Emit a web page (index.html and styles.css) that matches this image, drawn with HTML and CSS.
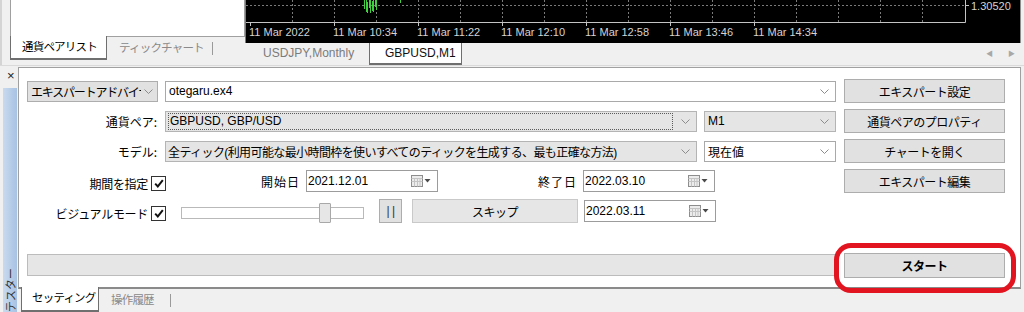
FILE: index.html
```html
<!DOCTYPE html>
<html lang="ja">
<head>
    <meta charset="UTF-8">
    <title>ストラテジーテスター</title>
    <link rel="stylesheet" href="styles.css">
</head>
<body>

    <div class="top">
        <div class="market">
            <div class="market-body"></div>
            <div class="tabs market-tabs">
                <div class="tab active">通貨ペアリスト</div>
                <div class="tab">ティックチャート</div>
                <span class="tab-sep"></span>
            </div>
        </div>

        <div class="chart-area">
            <div class="chart">
                <svg width="774" height="43" viewBox="0 0 774 43">
                    <g class="grid">
                        <line x1="0" y1="5.5" x2="718" y2="5.5"/>
                        <path d="M46.5 0v22M88.5 0v22M130.5 0v22M172.5 0v22M214.5 0v22M256.5 0v22M298.5 0v22M340.5 0v22M382.5 0v22M424.5 0v22M466.5 0v22M508.5 0v22M550.5 0v22M592.5 0v22M634.5 0v22M676.5 0v22"/>
                    </g>
                    <path class="frame" d="M0 22.5H719.5V0M4.5 22v4M88.5 22v4M172.5 22v4M256.5 22v4M340.5 22v4M424.5 22v4M508.5 22v4M719 5.5h4"/>
                    <path class="candles" d="M118.5 0v9M120.5 0v12M121.5 2v11M123.5 0v8M124.5 0v13M126.5 1v10M127.5 0v12M129.5 0v7M130.5 0v10M154.5 0v3"/>
                    <g class="axis">
                        <text x="3" y="36">11 Mar 2022</text>
                        <text x="87" y="36">11 Mar 10:34</text>
                        <text x="171" y="36">11 Mar 11:22</text>
                        <text x="255" y="36">11 Mar 12:10</text>
                        <text x="339" y="36">11 Mar 12:58</text>
                        <text x="423" y="36">11 Mar 13:46</text>
                        <text x="507" y="36">11 Mar 14:34</text>
                        <text x="725" y="10">1.30520</text>
                    </g>
                </svg>
            </div>
            <div class="chart-tabs">
                <div class="ctab">USDJPY,Monthly</div>
                <div class="ctab active">GBPUSD,M1</div>
                <div class="arrows"><span>&#9664;</span><span>&#9654;</span></div>
            </div>
        </div>
    </div>

    <div class="tester">
        <div class="side">
            <span class="close">&#215;</span>
            <div class="strip"><span class="strip-label">テスター</span></div>
        </div>

        <div class="main">
            <div class="form">
                <div class="row">
                    <div class="left">
                        <div class="combo w-type">
                            <span class="clip">エキスパートアドバイザ</span>
                            <svg class="chev" width="9" height="5" viewBox="0 0 9 5"><path d="M0.5 0.5l4 4 4-4"/></svg>
                        </div>
                        <div class="field w-ea">
                            <span>otegaru.ex4</span>
                            <svg class="chev" width="9" height="5" viewBox="0 0 9 5"><path d="M0.5 0.5l4 4 4-4"/></svg>
                        </div>
                    </div>
                    <button class="btn">エキスパート設定</button>
                </div>

                <div class="row">
                    <div class="left">
                        <label class="lbl">通貨ペア:</label>
                        <div class="select w-main">
                            <span class="focus">GBPUSD, GBP/USD</span>
                            <svg class="chev" width="9" height="5" viewBox="0 0 9 5"><path d="M0.5 0.5l4 4 4-4"/></svg>
                        </div>
                        <div class="select w-small">
                            <span>M1</span>
                            <svg class="chev" width="9" height="5" viewBox="0 0 9 5"><path d="M0.5 0.5l4 4 4-4"/></svg>
                        </div>
                    </div>
                    <button class="btn">通貨ペアのプロパティ</button>
                </div>

                <div class="row">
                    <div class="left">
                        <label class="lbl">モデル:</label>
                        <div class="select w-main">
                            <span class="clip model">全ティック(利用可能な最小時間枠を使いすべてのティックを生成する、最も正確な方法)</span>
                            <svg class="chev" width="9" height="5" viewBox="0 0 9 5"><path d="M0.5 0.5l4 4 4-4"/></svg>
                        </div>
                        <div class="field w-small">
                            <span>現在値</span>
                            <svg class="chev" width="9" height="5" viewBox="0 0 9 5"><path d="M0.5 0.5l4 4 4-4"/></svg>
                        </div>
                    </div>
                    <button class="btn">チャートを開く</button>
                </div>

                <div class="row">
                    <div class="left">
                        <label class="lbl-check">期間を指定 <span class="check"><svg width="10" height="9" viewBox="0 0 10 9"><path d="M1.2 4.6l2.6 2.8 5-6.2"/></svg></span></label>
                        <span class="date-lbl from">開始日</span>
                        <div class="date">
                            <span>2021.12.01</span>
                            <svg class="cal" width="20" height="12" viewBox="0 0 20 12"><rect x="0.5" y="0.5" width="11" height="11"/><path d="M0.5 3.5h11M0.5 6.5h11M3.5 3.5v8M6.5 3.5v8M9 3.5v8"/><path class="arr" d="M13.5 4h6l-3 3.5z"/></svg>
                        </div>
                        <span class="date-lbl to">終了日</span>
                        <div class="date">
                            <span>2022.03.10</span>
                            <svg class="cal" width="20" height="12" viewBox="0 0 20 12"><rect x="0.5" y="0.5" width="11" height="11"/><path d="M0.5 3.5h11M0.5 6.5h11M3.5 3.5v8M6.5 3.5v8M9 3.5v8"/><path class="arr" d="M13.5 4h6l-3 3.5z"/></svg>
                        </div>
                    </div>
                    <button class="btn">エキスパート編集</button>
                </div>

                <div class="row">
                    <div class="left">
                        <label class="lbl-check">ビジュアルモード <span class="check"><svg width="10" height="9" viewBox="0 0 10 9"><path d="M1.2 4.6l2.6 2.8 5-6.2"/></svg></span></label>
                        <div class="slider"><span class="thumb"></span></div>
                        <button class="btn pause">| |</button>
                        <button class="btn skip">スキップ</button>
                        <div class="date">
                            <span>2022.03.11</span>
                            <svg class="cal" width="20" height="12" viewBox="0 0 20 12"><rect x="0.5" y="0.5" width="11" height="11"/><path d="M0.5 3.5h11M0.5 6.5h11M3.5 3.5v8M6.5 3.5v8M9 3.5v8"/><path class="arr" d="M13.5 4h6l-3 3.5z"/></svg>
                        </div>
                    </div>
                </div>

                <div class="row progress-row">
                    <div class="left">
                        <div class="progress"></div>
                    </div>
                    <button class="btn start">スタート</button>
                </div>
            </div>

            <div class="tabs bottom-tabs">
                <div class="tab active">セッティング</div>
                <div class="tab">操作履歴</div>
                <span class="tab-sep"></span>
            </div>
        </div>
    </div>

    <div class="mark"></div>

</body>
</html>
```

FILE: styles.css
```css
* {
    box-sizing: border-box;
}

body {
    margin: 0;
    width: 1024px;
    height: 312px;
    overflow: hidden;
    position: relative;
    background-color: #f0f0f0;
    font-family: "Liberation Sans", "Noto Sans CJK JP", sans-serif;
    font-size: 12px;
    color: #000;
}

button {
    font: inherit;
    color: inherit;
}

/* top: market watch + chart */

.top {
    display: flex;
    height: 66px;
    border-bottom: 1px solid #dadada;
}

.market {
    width: 246px;
    padding-left: 8px;
    border-left: 2px solid #d4d4d4;
}

.market-body {
    height: 37px;
    background-color: #fff;
    border-left: 1px solid #a0a0a0;
    border-right: 1px solid #a0a0a0;
    border-bottom: 1px solid #a0a0a0;
}

.tabs {
    display: flex;
    align-items: flex-start;
    height: 23px;
}

.tab {
    height: 23px;
    line-height: 21px;
    padding: 0 4px 0 12px;
    color: #8a8a8a;
    font-family: "Noto Sans CJK JP", sans-serif;
    font-size: 11.5px;
    letter-spacing: -0.8px;
    white-space: nowrap;
}

.tab.active {
    margin-top: -1px;
    height: 24px;
    padding: 0 10px;
    background-color: #fff;
    color: #000;
    border: 1px solid #6f6f6f;
    border-top: none;
    border-bottom-width: 2px;
}

.market-tabs .tab.active {
    width: 97px;
    padding-left: 11px;
}

.tab-sep {
    width: 1px;
    height: 13px;
    margin-top: 5px;
    margin-left: 4px;
    background-color: #9a9a9a;
}

.chart-area {
    flex: 1;
    padding-right: 3px;
}

.chart {
    height: 43px;
    background-color: #000;
    border-left: 1px solid #7a7a7a;
    border-right: 1px solid #8d8d8d;
}

.chart svg {
    display: block;
}

.grid {
    stroke: #7a7a7a;
    stroke-dasharray: 2 2;
    fill: none;
}

.frame {
    stroke: #c4c4c4;
    fill: none;
}

.candles {
    stroke: #3fd13f;
    fill: none;
}

.axis {
    fill: #d4d4d4;
    font-family: "Liberation Sans", sans-serif;
    font-size: 11px;
}

.chart-tabs {
    display: flex;
    height: 22px;
    padding-left: 1px;
}

.ctab {
    width: 123px;
    line-height: 21px;
    padding-left: 17px;
    color: #7b7b7b;
    font-size: 12px;
}

.ctab.active {
    width: 93px;
    padding-left: 15px;
    color: #111;
    background-color: #fff;
    border: 1px solid #6f6f6f;
    border-top: none;
    border-bottom-width: 2px;
}

.arrows {
    margin-left: auto;
    display: flex;
    gap: 15px;
    padding: 5px 6px 0 0;
    font-size: 7px;
    color: #a8a8a8;
}

/* tester */

.tester {
    display: flex;
    height: 246px;
}

.side {
    width: 18px;
    display: flex;
    flex-direction: column;
}

.close {
    height: 22px;
    padding: 2px 0 0 7px;
    font-size: 13px;
    line-height: 16px;
    color: #222;
}

.strip {
    flex: 1;
    width: 14px;
    margin-left: 3px;
    display: flex;
    flex-direction: column;
    justify-content: flex-end;
    background: linear-gradient(to right, #c9daee, #a7c2e3);
}

.strip-label {
    writing-mode: vertical-rl;
    text-orientation: sideways;
    transform: rotate(180deg);
    font-family: "Noto Sans CJK JP", sans-serif;
    font-size: 11px;
    line-height: 14px;
    color: #333;
    padding-bottom: 2px;
}

.main {
    flex: 1;
    display: flex;
    flex-direction: column;
    padding-right: 3px;
}

.form {
    height: 222px;
    margin-top: 1px;
    padding: 11px 13px 0 8px;
    background-color: #fff;
    border: 1px solid #a0a0a0;
    border-bottom: 2px solid #8a8a8a;
    font-family: "Liberation Sans", "Noto Sans CJK JP", sans-serif;
}

.row {
    display: flex;
    align-items: center;
    height: 24px;
    margin-bottom: 6px;
}

.left {
    width: 809px;
    margin-right: 8px;
    display: flex;
    align-items: center;
}

.btn {
    width: 161px;
    height: 24px;
    padding: 0;
    background-color: #e1e1e1;
    border: 1px solid #adadad;
    text-align: center;
    font-family: "Noto Sans CJK JP", sans-serif;
    font-size: 12px;
    letter-spacing: -0.5px;
}

.chev {
    flex: none;
    stroke: #8c8c8c;
    fill: none;
}

.clip {
    overflow: hidden;
    white-space: nowrap;
}

.combo,
.field,
.select,
.date {
    display: flex;
    align-items: center;
    justify-content: space-between;
    height: 21px;
    padding: 0 6px 0 3px;
    white-space: nowrap;
}

.combo {
    background-color: #e1e1e1;
    border: 1px solid #adadad;
    font-family: "Noto Sans CJK JP", sans-serif;
    letter-spacing: -1.2px;
    padding-right: 4px;
    gap: 3px;
}

.field {
    background-color: #fff;
    border: 1px solid #a9a9a9;
}

.select {
    background-color: #e5e5e5;
    border: 1px solid #b4b4b4;
    gap: 8px;
}

.w-type {
    width: 131px;
}

.w-ea {
    width: 671px;
    margin-left: 7px;
}

.w-main {
    width: 532px;
    margin-left: 7px;
    padding-left: 2px;
}

.w-small {
    width: 132px;
    margin-left: 7px;
}

.model {
    letter-spacing: -0.6px;
}

.focus {
    flex: 1;
    height: 17px;
    line-height: 15px;
    padding-left: 1px;
    border: 1px dotted #5a5a5a;
}

.lbl {
    width: 131px;
    padding-right: 1px;
    text-align: right;
    font-family: "Noto Sans CJK JP", sans-serif;
}

.lbl-check {
    width: 139px;
    display: flex;
    align-items: center;
    justify-content: flex-end;
    gap: 3px;
    margin-top: 5px;
    font-family: "Noto Sans CJK JP", sans-serif;
    letter-spacing: -0.3px;
}

.check {
    width: 15px;
    height: 15px;
    display: flex;
    align-items: center;
    justify-content: center;
    border: 1px solid #333;
    background-color: #fff;
}

.check path {
    stroke: #111;
    stroke-width: 2;
    fill: none;
}

.date-lbl {
    font-family: "Noto Sans CJK JP", sans-serif;
    letter-spacing: 1px;
}

.date-lbl.from {
    margin-left: 95px;
    margin-right: 6px;
}

.date-lbl.to {
    margin-left: 100px;
    margin-right: 6px;
}

.date {
    width: 132px;
    height: 22px;
    padding: 0 6px 0 1px;
    background-color: #fff;
    border: 1px solid #9c9c9c;
}

.cal rect {
    fill: #ececec;
    stroke: #8d8d8d;
}

.cal path {
    stroke: #c4c4c4;
    fill: none;
}

.cal .arr {
    fill: #4a4a4a;
    stroke: none;
}

.slider {
    position: relative;
    width: 183px;
    height: 12px;
    margin-left: 15px;
    margin-top: 3px;
    border: 1px solid #b9b9b9;
    background-color: #fff;
}

.thumb {
    position: absolute;
    left: 137px;
    top: -5px;
    width: 12px;
    height: 20px;
    background-color: #e6e6e6;
    border: 1px solid #a8a8a8;
    border-radius: 1px;
}

.pause {
    width: 23px;
    height: 24px;
    margin-left: 15px;
    font-family: "Liberation Sans", sans-serif;
    color: #333;
}

.skip {
    width: 166px;
    margin-left: 10px;
    background-color: #e6e6e6;
    border-color: #c9c9c9;
}

.row .skip + .date {
    margin-left: 6px;
}

.progress-row {
    margin-top: 30px;
    margin-bottom: 0;
}

.progress {
    width: 809px;
    height: 22px;
    background-color: #e6e6e6;
    border: 1px solid #bcbcbc;
}

.start {
    height: 25px;
    font-weight: bold;
}

.bottom-tabs {
    padding-left: 3px;
}

.bottom-tabs .tab.active {
    width: 78px;
    padding-left: 10px;
    margin-top: -2px;
    height: 25px;
}

.bottom-tabs .tab-sep {
    margin-left: 12px;
}

/* red highlight drawn over the start button */
.mark {
    position: absolute;
    left: 834px;
    top: 243px;
    width: 182px;
    height: 50px;
    border: 5px solid #e2141f;
    border-radius: 17px;
}
```
